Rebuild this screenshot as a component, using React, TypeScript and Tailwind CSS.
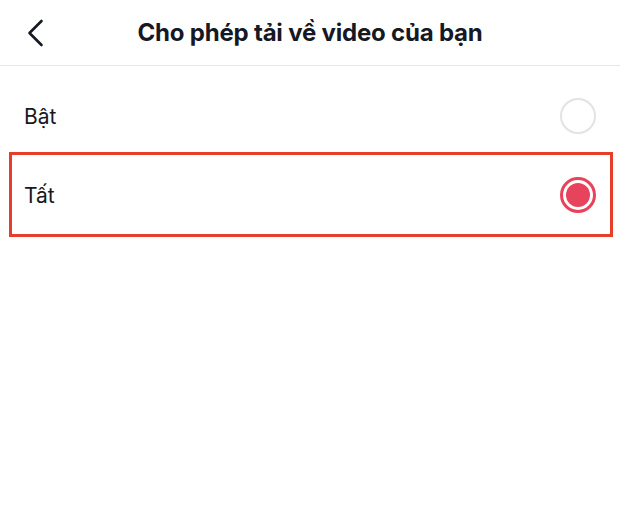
function Radio({ checked }: { checked: boolean }) {
  if (checked) {
    return (
      <span className="flex h-[36px] w-[36px] items-center justify-center rounded-full border-[3px] border-[#e8435d] bg-white">
        <span className="h-[24px] w-[24px] rounded-full bg-[#e8435d]" />
      </span>
    )
  }
  return <span className="block h-[36px] w-[36px] rounded-full border-2 border-[#e3e3e4] bg-white" />
}

function App() {
  return (
    <main className="min-h-screen w-full bg-white text-[#161823]" style={{ fontFamily: 'Inter, "Noto Sans", sans-serif' }}>
      <header className="relative flex h-[66px] items-center justify-center border-b border-[#e5e5e6]">
        <button className="absolute left-[24px] top-[18px] flex h-[30px] w-[22px] items-center justify-center">
          <svg width="18" height="28" viewBox="0 0 18 28" fill="none">
            <path d="M15.5 2 L3.5 14 L15.5 26" stroke="#161823" strokeWidth="2.6" strokeLinecap="round" strokeLinejoin="round" />
          </svg>
        </button>
        <h1 className="text-[24px] font-bold tracking-[-0.2px]">Cho phép tải về video của bạn</h1>
      </header>

      <div className="pt-[14px]">
        <div className="flex h-[72px] items-center justify-between pl-[24px] pr-[24px]">
          <span className="pt-[2px] text-[21px]">Bật</span>
          <Radio checked={false} />
        </div>
        <div className="ml-[9px] mr-[7px] flex h-[85px] items-center justify-between border-[3px] border-[#e53e2b] pl-[12px] pr-[14px]">
          <span className="pt-[2px] text-[21px]">Tất</span>
          <Radio checked={true} />
        </div>
      </div>
    </main>
  )
}

export default App
